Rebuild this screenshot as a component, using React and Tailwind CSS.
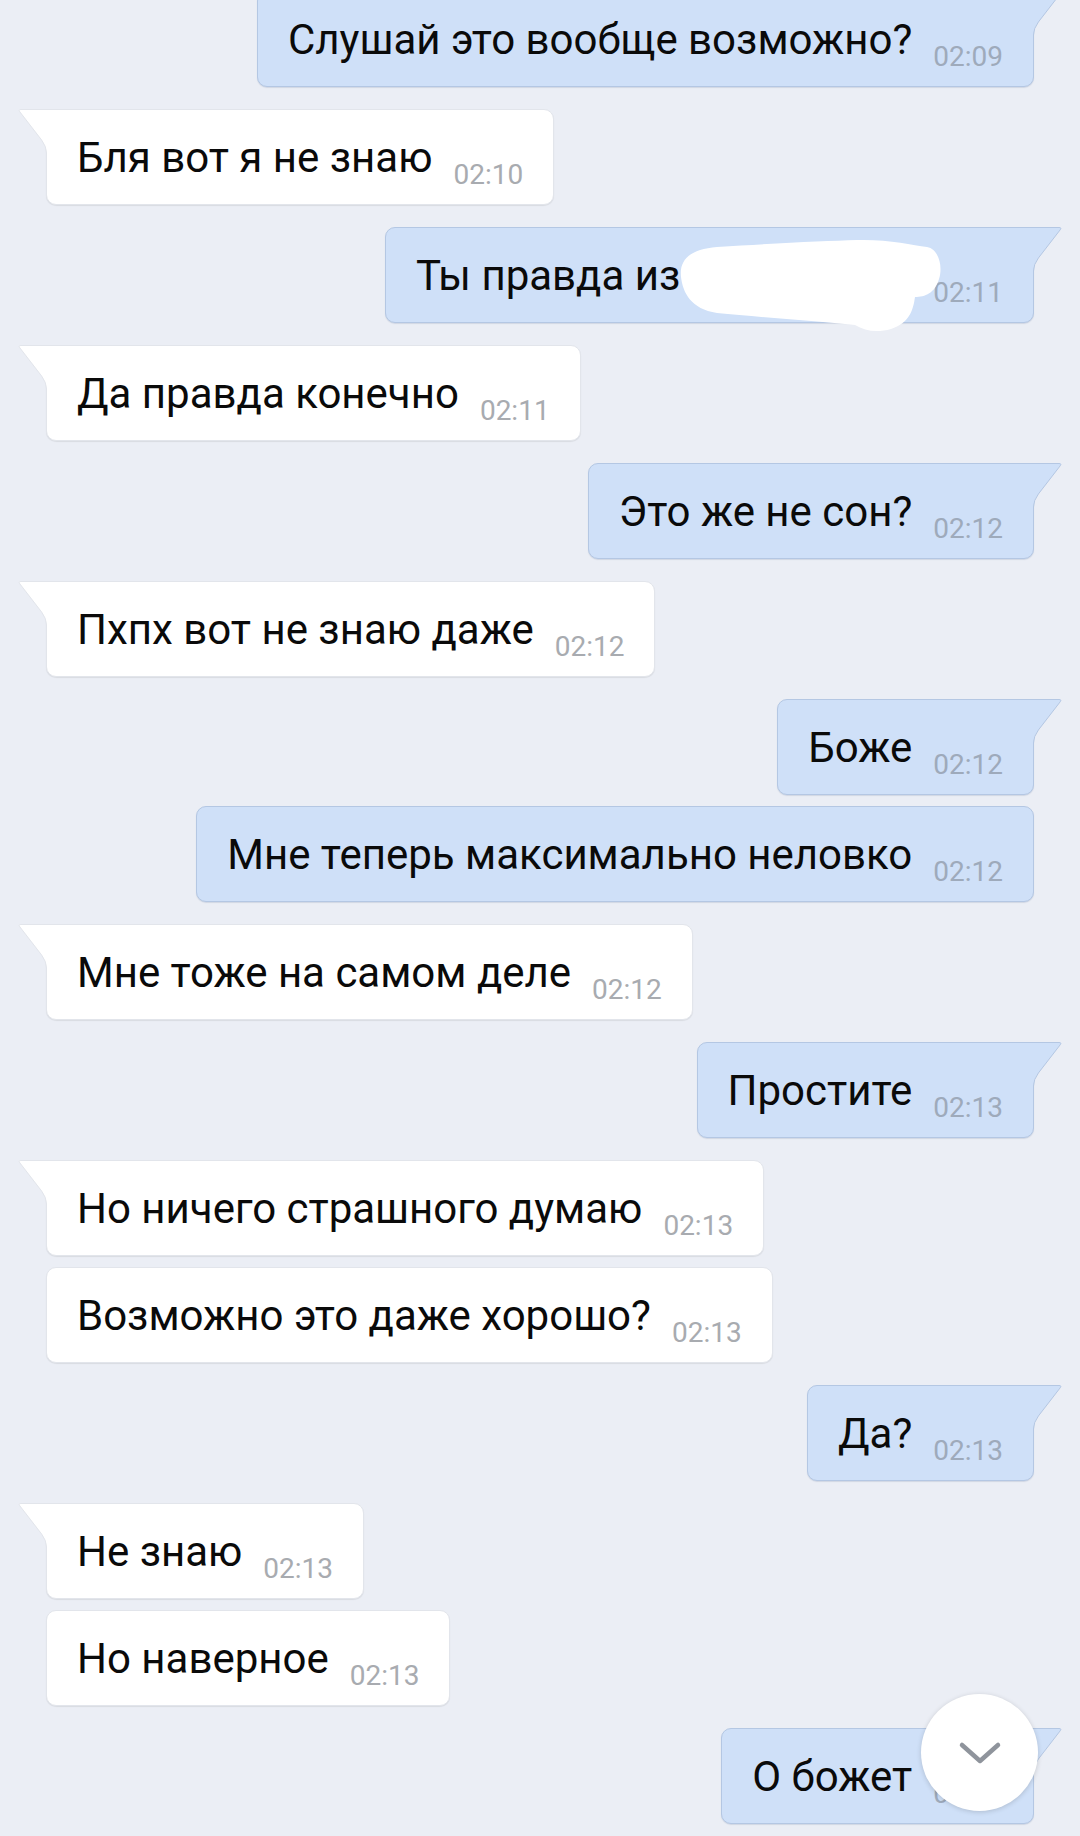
import React from 'react';

const messages = [
  { out: true, text: 'Слушай это вообще возможно?', time: '02:09' },
  { out: false, text: 'Бля вот я не знаю', time: '02:10' },
  { out: true, text: 'Ты правда из', time: '02:11', hidden: true },
  { out: false, text: 'Да правда конечно', time: '02:11' },
  { out: true, text: 'Это же не сон?', time: '02:12' },
  { out: false, text: 'Пхпх вот не знаю даже', time: '02:12' },
  { out: true, text: 'Боже', time: '02:12' },
  { out: true, text: 'Мне теперь максимально неловко', time: '02:12' },
  { out: false, text: 'Мне тоже на самом деле', time: '02:12' },
  { out: true, text: 'Простите', time: '02:13' },
  { out: false, text: 'Но ничего страшного думаю', time: '02:13' },
  { out: false, text: 'Возможно это даже хорошо?', time: '02:13' },
  { out: true, text: 'Да?', time: '02:13' },
  { out: false, text: 'Не знаю', time: '02:13' },
  { out: false, text: 'Но наверное', time: '02:13' },
  { out: true, text: 'О божет', time: '02:13' },
];

function Tail({ out }) {
  const fill = out ? '#cfe0f8' : '#ffffff';
  const stroke = out ? '#b4c7e3' : '#e2e5eb';
  return (
    <svg
      width="30"
      height="46"
      viewBox="0 0 30 46"
      className={out ? 'absolute top-[-1px] left-full' : 'absolute top-[-1px] right-full -scale-x-100'}
    >
      <path
        d="M0 0.5 H26 Q29 0.5 27.2 2.8 L5.4 31 Q0.5 37.5 0.5 44 L0 44 L0 0.5 Z"
        fill={fill}
      />
      <path
        d="M0 0.5 H26 Q29 0.5 27.2 2.8 L5.4 31 Q0.5 37.5 0.5 44"
        fill="none"
        stroke={stroke}
        strokeWidth="1"
      />
    </svg>
  );
}

function Scribble() {
  return (
    <svg
      width="268"
      height="98"
      viewBox="0 0 268 98"
      className="absolute top-[9px] right-[88px]"
    >
      <path
        d="M4 40 C2 22 14 12 40 10 C100 6 150 4 180 3 C210 2 235 8 250 10 C262 12 266 30 262 42 C258 56 248 60 238 60 C236 74 232 86 214 92 C200 96 188 94 178 88 C140 84 80 80 40 76 C14 72 6 56 4 40 Z"
        fill="#ffffff"
      />
    </svg>
  );
}

function Bubble({ msg, first }) {
  const base = msg.out
    ? 'bg-[#cfe0f8] border-[#b4c7e3] shadow-[0_1px_1px_rgba(90,110,150,0.18)]'
    : 'bg-white border-[#e2e5eb] shadow-[0_1px_1px_rgba(0,0,0,0.08)]';
  const corners = first
    ? msg.out
      ? 'rounded-[10px] rounded-tr-none'
      : 'rounded-[10px] rounded-tl-none'
    : 'rounded-[10px]';
  return (
    <div
      className={`relative flex items-end h-[96px] pl-[30px] pr-[30px] pb-[15px] border ${base} ${corners}`}
    >
      {first && <Tail out={msg.out} />}
      <span className="text-[42px] leading-none mb-[10px] text-[#0a0a0a] whitespace-nowrap">
        {msg.text}
      </span>
      {msg.hidden && <span className="inline-block w-[232px]" />}
      <span
        className={`ml-[21px] text-[28px] leading-none whitespace-nowrap ${
          msg.out ? 'text-[#9eaabb]' : 'text-[#a8abb0]'
        }`}
      >
        {msg.time}
      </span>
      {msg.hidden && <Scribble />}
    </div>
  );
}

export default function App() {
  return (
    <div
      className="relative h-[1836px] w-[1080px] overflow-hidden bg-[#ebeef5]"
      style={{ fontFamily: 'Roboto, "Noto Sans", sans-serif' }}
    >
      <div className="flex h-full flex-col justify-end px-[46px] pb-[12px]">
        {messages.map((msg, i) => {
          const prev = messages[i - 1];
          const first = !prev || prev.out !== msg.out;
          return (
            <div
              key={i}
              className={`flex ${msg.out ? 'justify-end' : 'justify-start'} ${
                i === 0 ? '' : first ? 'mt-[22px]' : 'mt-[11px]'
              }`}
            >
              <Bubble msg={msg} first={first} />
            </div>
          );
        })}
      </div>
      <button className="absolute right-[42px] bottom-[25px] flex h-[117px] w-[117px] items-center justify-center rounded-full bg-white shadow-[0_1px_5px_rgba(0,0,0,0.16)]">
        <svg width="48" height="48" viewBox="0 0 48 48">
          <path
            d="M6 16 L24 32 L42 16"
            fill="none"
            stroke="#8f949c"
            strokeWidth="4.5"
            strokeLinecap="round"
            strokeLinejoin="round"
          />
        </svg>
      </button>
    </div>
  );
}
